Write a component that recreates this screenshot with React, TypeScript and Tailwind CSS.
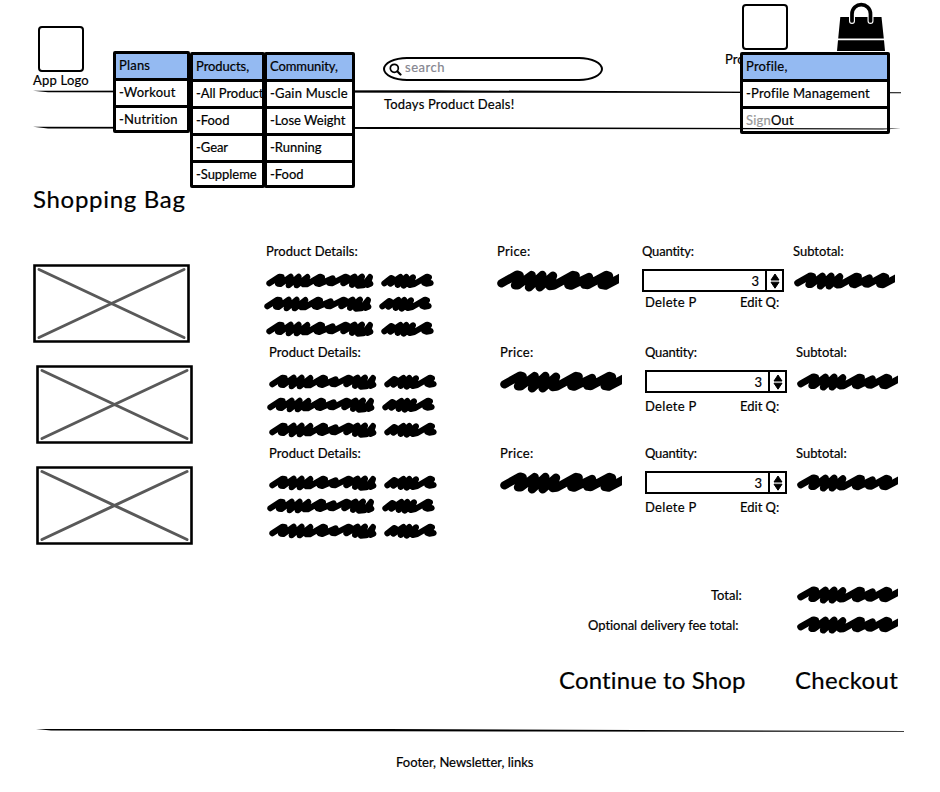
import React from "react";

const WIDE =
  "M13 40 L60 14 L68 16 L54 46 L62 46 L104 15 L96 52 L136 15 L128 52 L168 17 L158 48 L170 47 L228 15 L236 17 L214 45 L222 47 L276 21 L262 44 L272 45 L328 15 L336 18 L314 45 L326 47 L380 18";

function Scribble({ kind }: { kind: "long" | "short" | "price" | "subtotal" }) {
  if (kind === "long")
    return (
      <svg className="block h-4 w-[108px]" viewBox="0 0 324 48" fill="none" stroke="#000" strokeWidth="18" strokeLinecap="round" strokeLinejoin="round">
        <path d="M10 31 L40 11 L47 12 L36 32 L43 33 L74 11 L68 37 L98 11 L92 37 L124 12 L112 34 L122 34 L162 11 L168 13 L152 31 L160 33 L200 16 L190 30 L198 31 L238 11 L244 13 L232 31 L266 11 L258 36 L288 11 L276 38 L292 37 L312 12 L304 36 L313 32" />
      </svg>
    );
  if (kind === "short")
    return (
      <svg className="block h-4 w-[53px]" viewBox="0 0 159 48" fill="none" stroke="#000" strokeWidth="18" strokeLinecap="round" strokeLinejoin="round">
        <path d="M10 31 L30 15 L34 16 L28 32 L58 12 L50 36 L76 12 L68 38 L96 13 L86 36 L100 33 L138 11 L144 13 L130 30 L136 32 L149 30" />
      </svg>
    );
  return (
    <svg
      className={kind === "price" ? "block h-[22px] w-[122px]" : "block h-[18px] w-[102px]"}
      viewBox="0 0 366 66"
      fill="none"
      stroke="#000"
      strokeWidth="25"
      strokeLinecap="round"
      strokeLinejoin="round"
    >
      <path d={WIDE} />
    </svg>
  );
}

function Rule({ points }: { points: string }) {
  return (
    <svg className="block h-1 w-[868px]" viewBox="0 0 868 4">
      <polygon points={points} />
    </svg>
  );
}

function Menu({ items, className }: { items: React.ReactNode[]; className: string }) {
  return (
    <div className={`absolute divide-y-[3px] divide-black overflow-hidden rounded-[2px] border-[3px] border-black bg-white ${className}`}>
      {items.map((item, i) => (
        <div
          key={i}
          className={`flex items-center whitespace-nowrap pl-[3px] ${i === items.length - 1 ? "h-[21px]" : "h-[27px] pb-[2px]"} ${i === 0 ? "bg-[#94baf2]" : ""}`}
        >
          {item}
        </div>
      ))}
    </div>
  );
}

function Picture() {
  return (
    <svg className="block h-[79px] w-[157px]" viewBox="0 0 157 79" fill="none">
      <path d="M1.5 1.5 L155.5 1.5 L155.5 77.5 L1.5 77.5 Z" stroke="#000" strokeWidth="2.6" />
      <path d="M6 5.5 L151 73.5 M6 73.5 L151 5.5" stroke="#595959" strokeWidth="3" strokeLinecap="round" />
    </svg>
  );
}

function Stepper() {
  return (
    <div className="flex h-[23px] w-[142px] border-[2.5px] border-black">
      <div className="flex flex-1 items-center justify-end pr-[6px]">3</div>
      <div className="flex w-[17px] items-center justify-center border-l-2 border-black">
        <svg className="block h-[16px] w-[10px]" viewBox="0 0 10 16">
          <path d="M5 1 L9 7 L1 7 Z M1 9.2 L9 9.2 L5 15.2 Z" stroke="#000" strokeLinejoin="round" />
        </svg>
      </div>
    </div>
  );
}

function BagRow({ first }: { first?: boolean }) {
  return (
    <div className={`flex h-[101px] ${first ? "ml-[33px]" : "ml-[36px]"}`}>
      <div className="w-[231px] pt-5">
        <Picture />
      </div>
      <div className="w-[233px]">
        <div className="h-4 pl-[2px] tracking-[0.05px]">Product Details:</div>
        <div className="flex gap-[7px] pl-[2px] pt-[13px]"><Scribble kind="long" /><Scribble kind="short" /></div>
        <div className="flex gap-[7px] pt-[7px]"><Scribble kind="long" /><Scribble kind="short" /></div>
        <div className="flex gap-[7px] pl-[2px] pt-[9px]"><Scribble kind="long" /><Scribble kind="short" /></div>
      </div>
      <div className="w-[145px]">
        <div className="h-4 tracking-[0.3px]">Price:</div>
        <div className="pt-[10px]"><Scribble kind="price" /></div>
      </div>
      <div className="w-[151px]">
        <div className="h-4 tracking-[-0.2px]">Quantity:</div>
        <div className="pt-[9px]"><Stepper /></div>
        <div className={`flex ${first ? "ml-[3px] pt-[3px]" : "pt-[6px]"}`}>
          <span className="w-[95px] tracking-[0.3px]">Delete P</span>
          <span>Edit Q:</span>
        </div>
      </div>
      <div>
        <div className="h-4">Subtotal:</div>
        <div className="pt-[12px]"><Scribble kind="subtotal" /></div>
      </div>
    </div>
  );
}

export default function App() {
  return (
    <div className="h-[792px] w-[940px] overflow-hidden bg-white font-['Lato','Liberation_Sans',sans-serif] text-[13px] leading-[14px] text-black [-webkit-text-stroke:0.2px]">
      <header className="relative h-[188px]">
        <div className="flex h-[90px] items-start">
          <div className="ml-[33px] w-[350px] pt-[26px]">
            <div className="ml-[5px] h-[46px] w-[46px] rounded-[4px] border-2 border-black" />
            <div className="pt-[1px] tracking-[0.2px]">App Logo</div>
          </div>
          <div className="mt-[57px] flex h-[24px] w-[220px] items-center rounded-[24px/12px] border-2 border-black pl-[4px] text-[#85858f]">
            <svg className="h-[13px] w-[13px]" viewBox="0 0 13 13" fill="none" stroke="#000" strokeLinecap="round">
              <circle cx="5.3" cy="5.3" r="4" strokeWidth="1.7" />
              <path d="M8.5 8.5 L11.5 11.5" strokeWidth="2.2" />
            </svg>
            <span className="pb-[4px] pl-[3px] tracking-[0.5px]">search</span>
          </div>
          <div className="ml-[122px] w-[112px] pt-[4px]">
            <div className="ml-[17px] h-[46px] w-[46px] rounded-[4px] border-2 border-black" />
            <div className="pt-[2px]">Profile</div>
          </div>
          <svg className="mt-[2px] h-[50px] w-[50px]" viewBox="0 0 50 50">
            <path d="M3.3 15 H44.5 L46.8 36.5 H1.2 Z M1 38.2 H47 L48 49 H0 Z" />
            <path d="M15 19 V12 C15 -0.4 33.5 -0.4 33.5 12 V19" fill="none" stroke="#fff" strokeWidth="6" strokeLinecap="round" />
            <path d="M15 19 V12 C15 -0.4 33.5 -0.4 33.5 12 V19" fill="none" stroke="#000" strokeWidth="3.7" strokeLinecap="round" />
          </svg>
        </div>
        <div className="ml-[33px]"><Rule points="0,0.7 400,0.3 868,2.3 868,3.2 400,2.8 15,2.2" /></div>
        <div className="ml-[384px] h-[32px] pt-[3px] tracking-[0.2px]">Todays Product Deals!</div>
        <div className="relative z-10 ml-[33px]"><Rule points="0,0.8 350,1 868,2.4 850,3.4 350,3 15,2.4" /></div>
        <Menu className="left-[113px] top-[51px] z-20 h-[82px] w-[77px] tracking-[0.2px]" items={["Plans", "-Workout", "-Nutrition"]} />
        <Menu className="left-[190px] top-[52px] z-20 h-[136px] w-[75px] tracking-[-0.05px]" items={["Products,", "-All Product", "-Food", "-Gear", "-Suppleme"]} />
        <Menu className="left-[264px] top-[52px] z-20 h-[136px] w-[91px]" items={[<span className="tracking-[-0.1px]">Community,</span>, <span className="tracking-[0.2px]">-Gain Muscle</span>, "-Lose Weight", "-Running", "-Food"]} />
        <Menu className="left-[740px] top-[52px] h-[82px] w-[150px] tracking-[0.2px]" items={["Profile,", "-Profile Management", <><span className="text-[#999]">Sign</span>Out</>]} />
      </header>
      <h1 className="ml-[33px] h-[56px] text-2xl leading-[22px] tracking-[0.7px]">Shopping Bag</h1>
      <main>
        <BagRow first />
        <BagRow />
        <BagRow />
      </main>
      <section className="flex h-[79px] flex-col gap-3 pt-[39px]">
        <div className="flex h-[18px] items-center">
          <span className="ml-[711px] w-[85px]">Total:</span><Scribble kind="subtotal" />
        </div>
        <div className="flex h-[18px] items-center">
          <span className="ml-[588px] w-[208px] tracking-[-0.04px]">Optional delivery fee total:</span><Scribble kind="subtotal" />
        </div>
      </section>
      <div className="flex h-[102px] pt-[43px] text-2xl leading-[22px]">
        <span className="ml-[559px] w-[236px] tracking-[0.16px]">Continue to Shop</span>
        <span className="tracking-[0.3px]">Checkout</span>
      </div>
      <footer>
        <div className="ml-[36px]"><Rule points="0,1 350,0.9 868,3 868,3.8 500,3.6 15,2.4" /></div>
        <div className="ml-[396px] pt-[23px]">Footer, Newsletter, links</div>
      </footer>
    </div>
  );
}
